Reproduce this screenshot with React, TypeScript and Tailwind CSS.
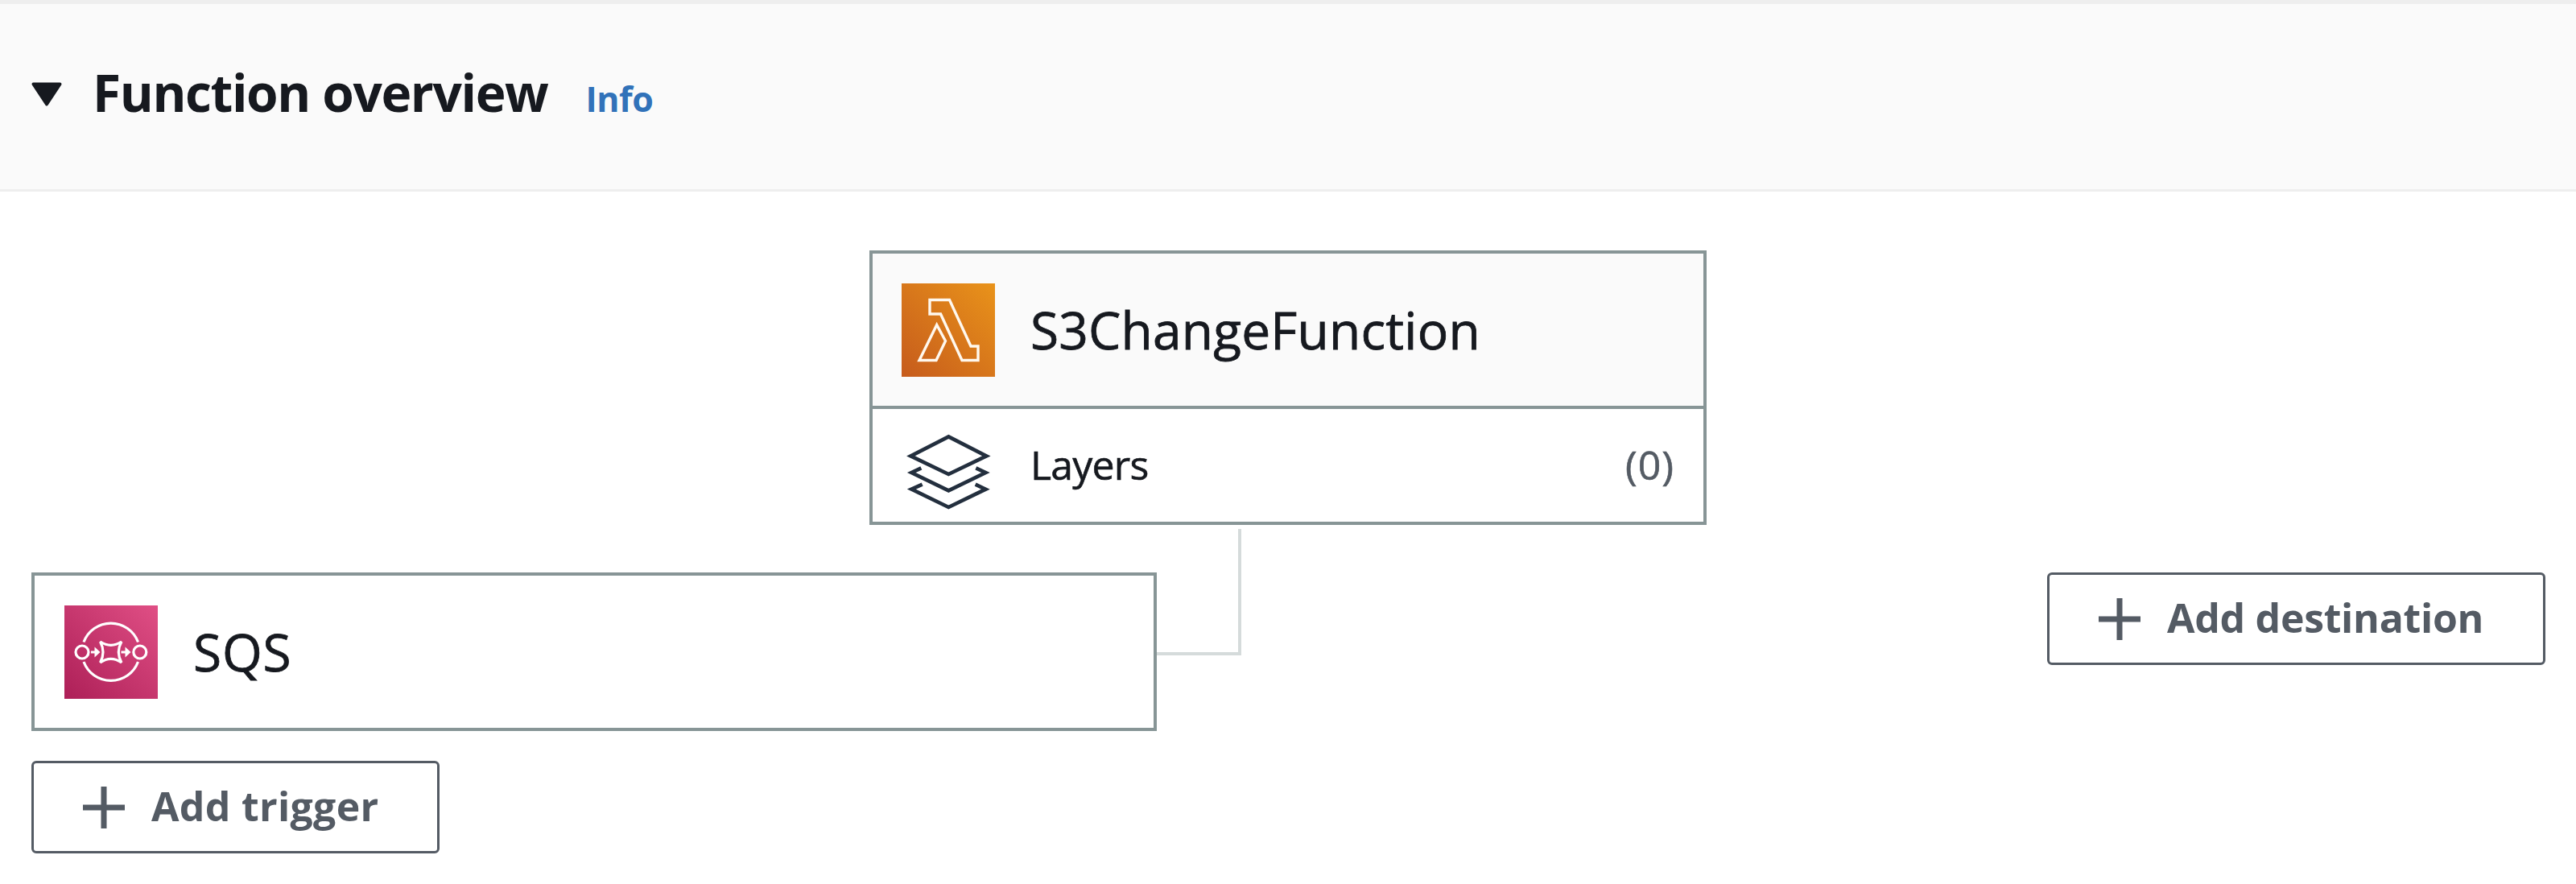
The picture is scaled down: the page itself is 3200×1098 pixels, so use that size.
function CaretDown() {
  return (
    <svg viewBox="0 0 40 32" className="mt-2 h-8 w-10" fill="#16191f" aria-hidden="true">
      <path d="M3.5 3.5H36.500L20 28.500Z" stroke="#16191f" strokeWidth="4" strokeLinejoin="round" />
    </svg>
  );
}

function LambdaIcon() {
  return (
    <svg viewBox="0 0 116 116" className="size-[116px] shrink-0" fill="none" aria-hidden="true">
      <defs>
        <linearGradient id="lambda-bg" x1="0" y1="1" x2="1" y2="0">
          <stop offset="0" stopColor="#c65b1c" />
          <stop offset="1" stopColor="#e9931a" />
        </linearGradient>
      </defs>
      <rect width="116" height="116" fill="url(#lambda-bg)" />
      <g stroke="#fff8ee" strokeWidth="3.4">
        <path d="M35 20.500H59.500L86 78H95V95.500H75L48.500 38H35Z" />
        <path d="M43.700 51.500L54.500 71.500L43 95.500H22Z" />
      </g>
    </svg>
  );
}

function SqsIcon() {
  return (
    <svg viewBox="0 0 116 116" className="size-[116px] shrink-0" fill="none" aria-hidden="true">
      <defs>
        <linearGradient id="sqs-bg" x1="0" y1="1" x2="1" y2="0">
          <stop offset="0" stopColor="#ad1f57" />
          <stop offset="1" stopColor="#e04f85" />
        </linearGradient>
      </defs>
      <rect width="116" height="116" fill="url(#sqs-bg)" />
      <g stroke="#fff" strokeWidth="3.2">
        <path d="M24 45.500A36 36 0 0 1 91.500 45.500" />
        <path d="M24 70A36 36 0 0 0 91.500 70" />
        <circle cx="22" cy="58" r="8" />
        <circle cx="93.800" cy="58" r="8" />
        <path d="M44.500 45Q57.700 53.600 71 45Q63.600 58 71 71Q57.700 61.600 44.500 71Q51.500 58 44.500 45Z" />
        <path d="M33 58H39M70.500 58H77" />
      </g>
      <path d="M37.500 51.500L44.500 58L37.500 64.500ZM75.500 51.500L82.500 58L75.500 64.500Z" fill="#fff" />
    </svg>
  );
}

function LayersIcon() {
  return (
    <svg viewBox="60 24 348 348" className="mt-4 size-[116px] shrink-0" fill="none" stroke="#232f3e" strokeWidth="14" aria-hidden="true">
      <path d="M235 67L376 139L235 207L94 139Z" />
      <path d="M133 184L97 201L235 268L373 201L337 184" />
      <path d="M137 245L97 263L235 330L373 263L335 245" />
    </svg>
  );
}

function ActionButton({ label, className }: { label: string; className: string }) {
  return (
    <button
      type="button"
      className={`flex h-[115px] items-center gap-[33px] rounded-md border-3 border-[#545b64] bg-white pl-[61px] text-[50px] leading-none font-bold text-[#545b64] ${className}`}
    >
      <svg viewBox="0 0 52 52" className="size-[52px] shrink-0" stroke="currentColor" strokeWidth="7" aria-hidden="true">
        <path d="M26 0V52M0 26H52" />
      </svg>
      <span className="pb-1 whitespace-nowrap">{label}</span>
    </button>
  );
}

export default function App() {
  return (
    <div className="h-[1098px] w-full overflow-hidden bg-white font-['Open_Sans','Noto_Sans',sans-serif] text-[#16191f]">
      <header className="flex h-[238px] items-start border-t-5 border-b-3 border-[#eeeeee] bg-[#fafafa] pt-[78px] pl-[38px]">
        <div className="flex h-15 items-center">
          <CaretDown />
        </div>
        <div className="ml-[37px] flex items-baseline gap-[47px]">
          <h2 className="text-[64px] leading-[64px] font-bold tracking-[-1.4px]">Function overview</h2>
          <a className="text-[43px] leading-none font-bold tracking-[-0.4px] text-[#3172b9]">Info</a>
        </div>
      </header>

      <main className="pt-[73px] pr-[38px] pl-[39px]">
        <section className="ml-[1041px] h-[341px] w-[1040px] border-4 border-[#879596]">
          <div className="flex h-[193px] items-center gap-11 border-b-4 border-[#879596] bg-[#fafafa] pl-9">
            <LambdaIcon />
            <span className="text-[64px] leading-none tracking-[0.2px] [-webkit-text-stroke:0.8px]">S3ChangeFunction</span>
          </div>
          <div className="flex h-[140px] items-center gap-11 pr-9 pl-9 text-[50px] leading-none [-webkit-text-stroke:0.6px]">
            <LayersIcon />
            <span className="pb-0.5 tracking-[-0.8px]">Layers</span>
            <span className="ml-auto pb-0.5 tracking-[1px] text-[#545b64]">(0)</span>
          </div>
        </section>

        <section className="mt-[59px] flex items-start">
          <div>
            <div className="flex h-[197px] w-[1398px] items-center gap-11 border-4 border-[#879596] pl-[37px]">
              <SqsIcon />
              <span className="text-[64px] leading-none tracking-[0.8px] [-webkit-text-stroke:0.8px]">SQS</span>
            </div>
            <ActionButton label="Add trigger" className="mt-[37px] w-[507px] tracking-[0.3px]" />
          </div>
          <div className="-mt-[54px] h-[157px] w-[105px] border-r-4 border-b-4 border-[#d5dbdb]" />
          <ActionButton label="Add destination" className="ml-auto w-[619px] tracking-[-0.3px]" />
        </section>
      </main>
    </div>
  );
}
